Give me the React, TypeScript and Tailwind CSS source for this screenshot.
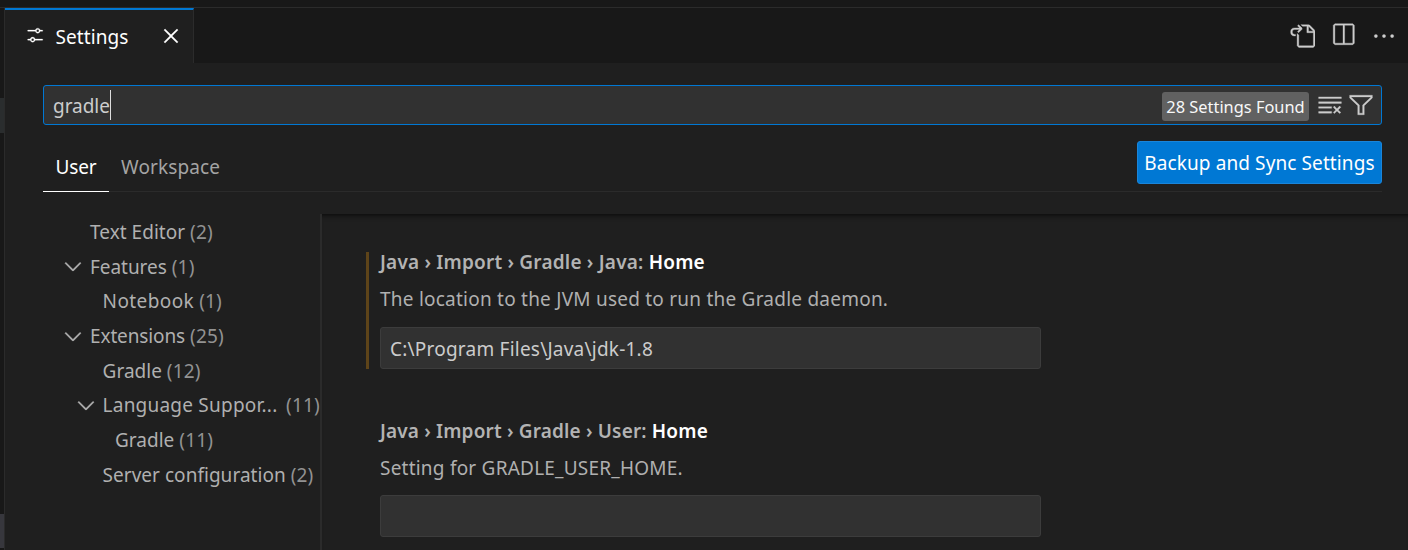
import type { ReactNode } from "react";
import {
  VscSettings,
  VscClose,
  VscGoToFile,
  VscSplitHorizontal,
  VscEllipsis,
  VscClearAll,
  VscFilter,
  VscChevronDown,
} from "react-icons/vsc";

type TreeItem = { label: string; count: number; indent: string; spacing: string; open?: boolean; gap?: string };

const tree: TreeItem[] = [
  { label: "Text Editor", count: 2, indent: "pl-[20px]", spacing: "tracking-[0.03px]" },
  { label: "Features", count: 1, indent: "pl-[20px]", spacing: "tracking-[-0.05px]", open: true },
  { label: "Notebook", count: 1, indent: "pl-[32.6px]", spacing: "tracking-[0.4px]" },
  { label: "Extensions", count: 25, indent: "pl-[20px]", spacing: "tracking-[-0.12px]", open: true },
  { label: "Gradle", count: 12, indent: "pl-[32.6px]", spacing: "" },
  { label: "Language Suppor...", count: 11, indent: "pl-[32.6px]", spacing: "tracking-[0.22px]", open: true, gap: "ml-[8.6px]" },
  { label: "Gradle", count: 11, indent: "pl-[45px]", spacing: "" },
  { label: "Server configuration", count: 2, indent: "pl-[32.6px]", spacing: "tracking-[0.03px]" },
];

function TreeRow({ label, count, indent, spacing, open, gap }: TreeItem) {
  return (
    <div className={`flex h-[34.7px] items-center whitespace-nowrap ${indent}`}>
      <span className="-ml-[1px] flex w-[27px] shrink-0 items-center">
        {open && <VscChevronDown size={26} className="-ml-[3px] -mt-[1px] stroke-[0.2px]" />}
      </span>
      <span className={spacing}>{label}</span>
      <span className={`tracking-[0.15px] text-[#929292] ${gap ?? "ml-[5px]"}`}>({count})</span>
    </div>
  );
}

function Setting({
  category,
  description,
  modified,
  titleSpacing,
  descClass,
  children,
}: {
  category: string;
  description: string;
  modified?: boolean;
  titleSpacing: string;
  descClass: string;
  children?: ReactNode;
}) {
  return (
    <section className={`border-l-3 pl-[11px] ${modified ? "border-[#5e4419]" : "border-transparent"}`}>
      <h3 className={`h-[20px] whitespace-pre font-semibold leading-[20px] text-[#b3b3b3] ${titleSpacing}`}>
        {category} <span className="text-white">Home</span>
      </h3>
      <p className={`h-[20px] whitespace-nowrap leading-[20px] ${descClass}`}>{description}</p>
      <div className="flex h-[42px] w-[661px] items-center rounded-[3px] border border-[#3c3c3c] bg-[#313131] pt-[2px] pl-[9px] tracking-[0.22px] text-[#cccccc]">
        {children}
      </div>
    </section>
  );
}

export default function App() {
  return (
    <div className="flex h-[550px] w-[1408px] flex-col overflow-hidden bg-[#181818] font-['Noto_Sans',sans-serif] text-[19px] leading-[26px] text-[#b0b0b0]">
      <div className="h-[7px] shrink-0" />
      <div className="h-px shrink-0 bg-[#2b2b2b]" />
      <div className="flex min-h-0 flex-1">
        <div className="flex w-[4px] shrink-0 flex-col justify-between pt-[90px] pb-[2px]">
          <div className="h-[35px] bg-[#2a2d2e]" />
          <div className="h-[34px] bg-[#37373d]" />
        </div>
        <main className="flex min-w-0 flex-1 flex-col border-l border-[#2b2b2b] bg-[#1f1f1f]">
          <header className="flex h-[55px] shrink-0 bg-[#181818]">
            <div className="flex w-[189px] items-center border-t-2 border-r border-t-[#0078d4] border-r-[#2b2b2b] bg-[#1f1f1f] pl-[20px] text-white">
              <VscSettings size={20.4} className="-mt-[2px] shrink-0 stroke-[0.2px]" />
              <span className="ml-[10px] w-[74px] pt-[1px] tracking-[0.1px]">Settings</span>
              <VscClose size={26} className="-mt-[2px] ml-[29px] shrink-0 stroke-[0.2px]" />
            </div>
            <div className="ml-auto flex items-center gap-[14px] pr-[11.5px] text-[#cccccc]">
              <VscGoToFile size={26} className="mr-[1px] stroke-[0.2px]" />
              <VscSplitHorizontal size={26} className="-mt-px mr-[1px] stroke-[0.2px]" />
              <VscEllipsis size={26} className="stroke-[0.2px]" />
            </div>
          </header>

          <div className="mt-[22px] mr-[26px] ml-[38px] flex h-[40px] shrink-0 items-center rounded-[3px] border border-[#0078d4] bg-[#313131] pl-[9px] text-[#cccccc]">
            <span className="pt-[2px] tracking-[-0.05px]">gradle</span>
            <span className="h-[30px] w-px bg-[#dddddd]" />
            <span className="mt-[2px] ml-auto flex h-[29px] w-[147px] items-center justify-center rounded-[3px] bg-[#616161] pt-[2px] text-[16.4px] text-[#f8f8f8]">
              28 Settings Found
            </span>
            <VscClearAll size={26} className="ml-[7.5px] stroke-[0.2px]" />
            <VscFilter size={26} className="mr-[7px] ml-[5.5px] stroke-[0.2px]" />
          </div>

          <div className="mt-[16px] mr-[26px] ml-[38px] flex h-[51px] shrink-0 border-b border-[#2b2b2b]">
            <div className="-mb-px flex w-[66px] items-center justify-center border-b border-white pt-[2px] text-white tracking-[-0.2px]">
              User
            </div>
            <div className="flex items-center pt-[1px] pl-[12px] tracking-[0.12px] text-[#a4a4a4]">Workspace</div>
            <button className="ml-auto h-[43px] w-[245px] rounded-[3px] border border-[#1a85d9] bg-[#0078d4] pt-[1px] tracking-[0.1px] text-white">
              Backup and Sync Settings
            </button>
          </div>

          <div className="mt-[22px] flex min-h-0 flex-1">
            <nav className="w-[317px] shrink-0 overflow-hidden border-r-2 border-[#2b2b2b] pt-[0.7px] pl-[39px]">
              {tree.map((item, i) => (
                <TreeRow key={i} {...item} />
              ))}
            </nav>
            <div className="min-w-0 flex-1 pt-[38px] pl-[44px] shadow-[inset_0_6px_6px_-6px_#000000]">
              <Setting
                category="Java › Import › Gradle › Java:"
                description="The location to the JVM used to run the Gradle daemon."
                titleSpacing="tracking-[0.2px]"
                descClass="mt-[17px] mb-[18px] tracking-[0.23px]"
                modified
              >
                C:\Program Files\Java\jdk-1.8
              </Setting>
              <div className="h-[52px]" />
              <Setting
                category="Java › Import › Gradle › User:"
                description="Setting for GRADLE_USER_HOME."
                titleSpacing="tracking-[0.16px]"
                descClass="mt-[17px] mb-[17px] tracking-[0.22px]"
              />
            </div>
          </div>
        </main>
      </div>
    </div>
  );
}
